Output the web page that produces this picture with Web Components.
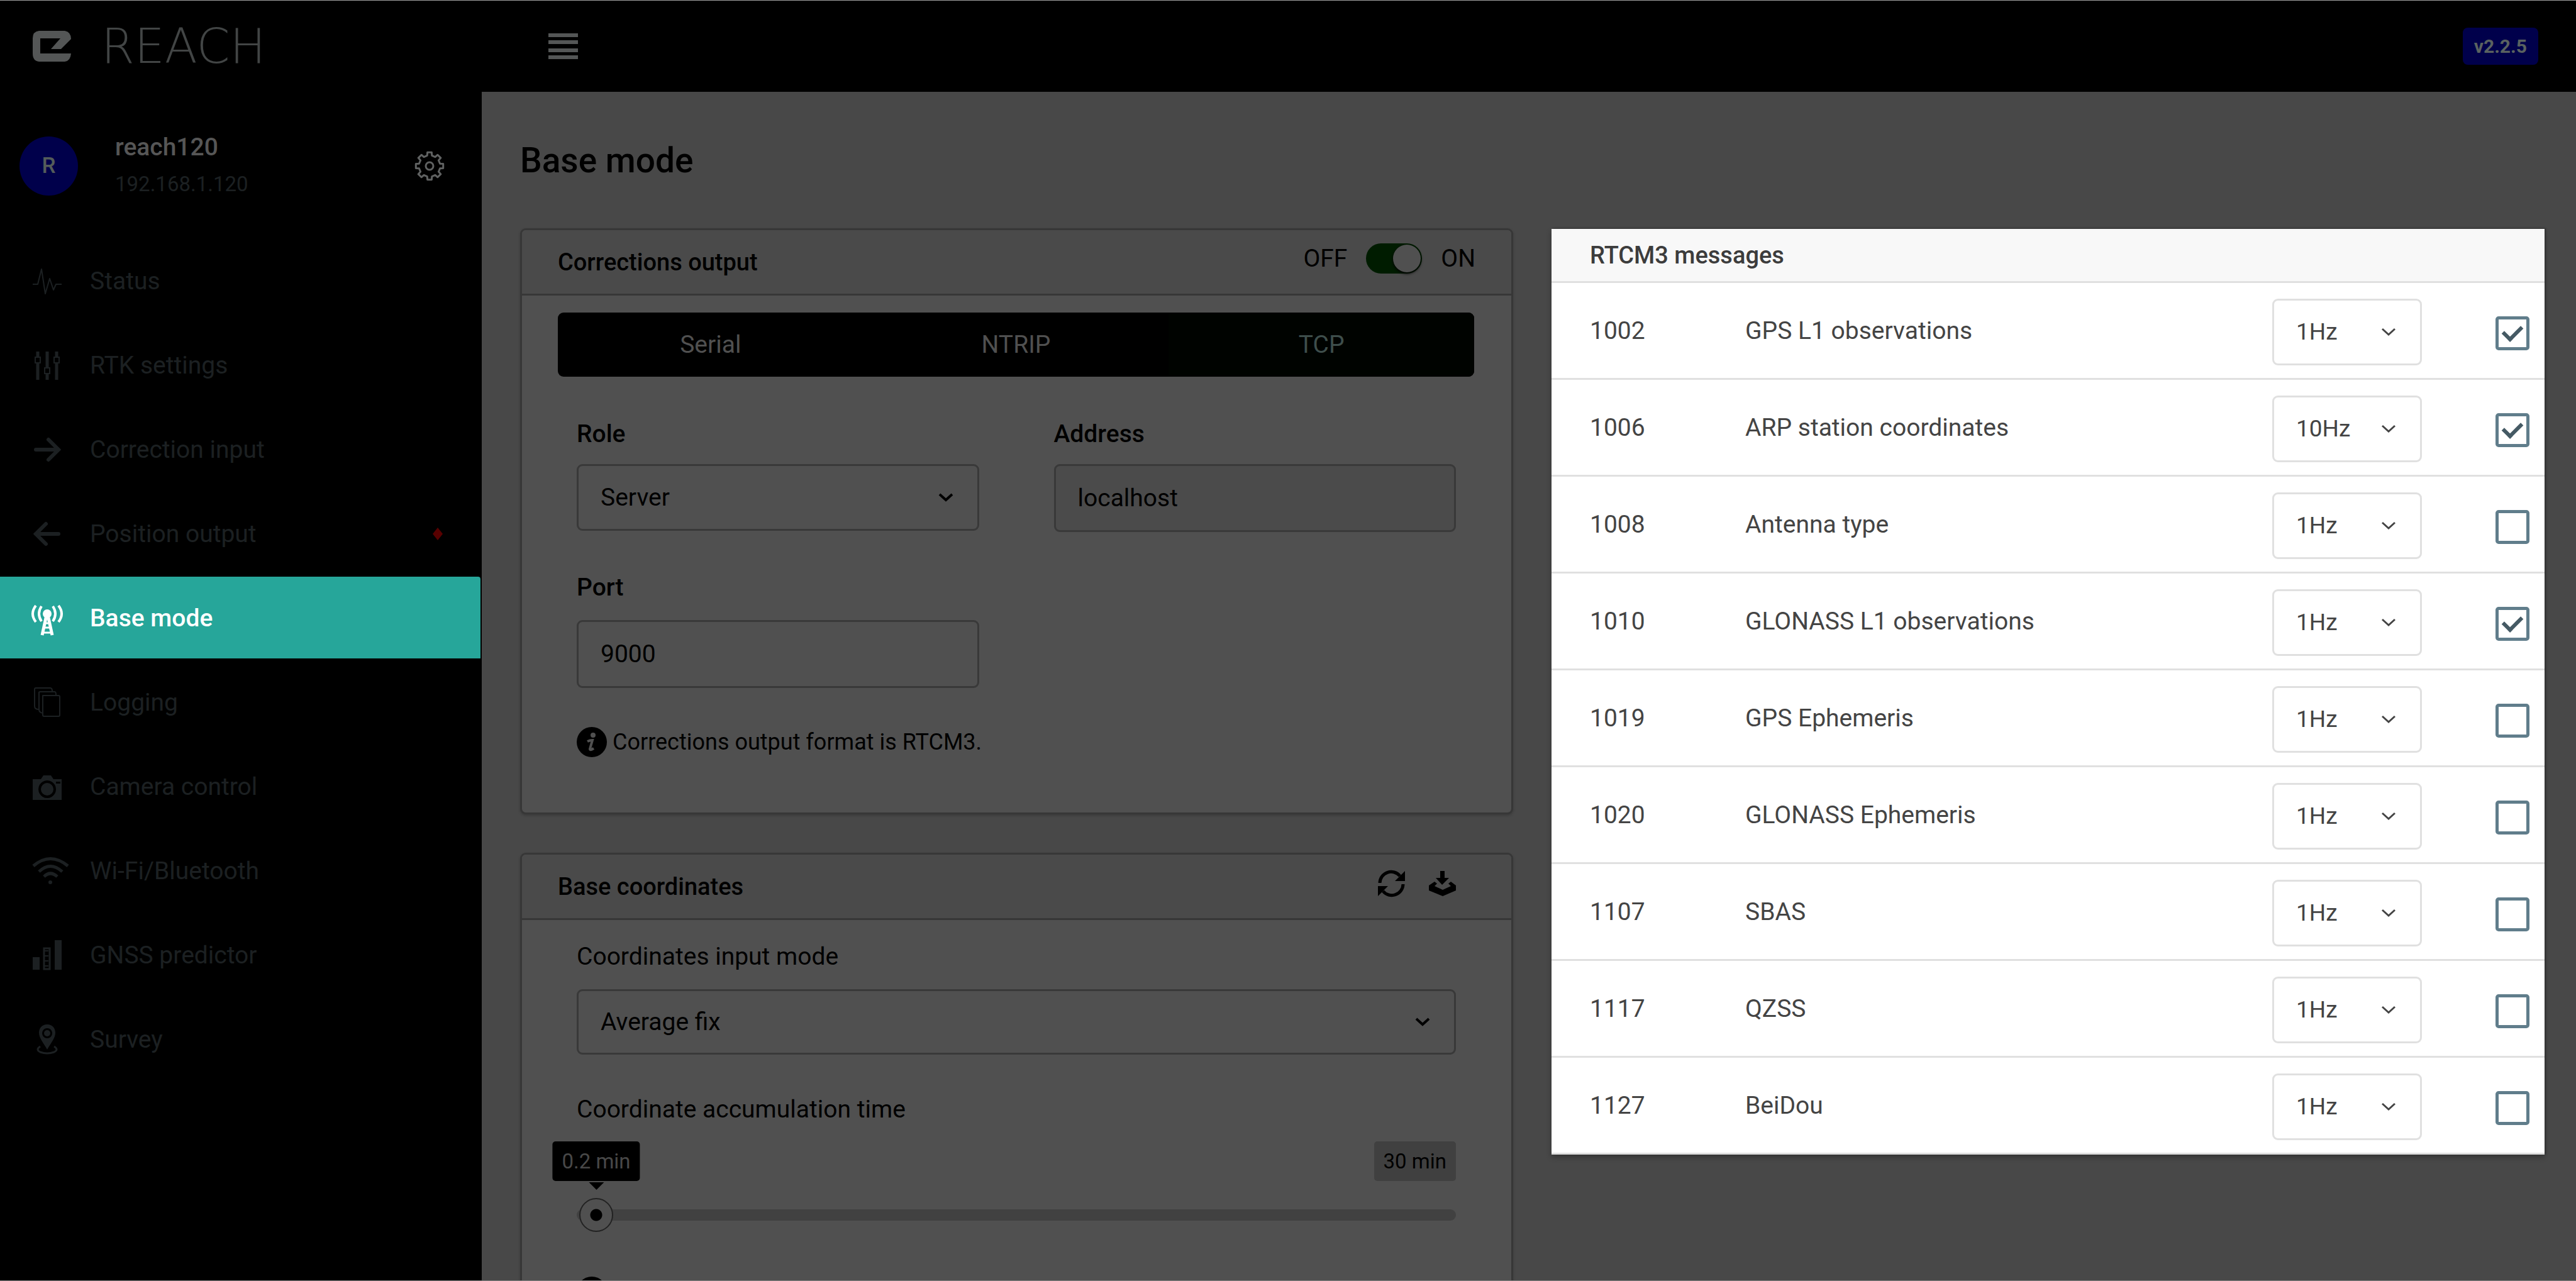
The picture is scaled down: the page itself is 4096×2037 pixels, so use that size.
<!DOCTYPE html>
<html lang="en">
<head>
<meta charset="utf-8">
<title>Reach – Base mode</title>
<style>
  body { margin: 0; background: #484848; font-family: Roboto, "Liberation Sans", sans-serif; font-size: 39px; line-height: 48px; color: #000; }
</style>
</head>
<body>
<reach-shell>
  <reach-topbar slot="top" version="v2.2.5"></reach-topbar>
  <reach-sidebar slot="side" device="reach120" address="192.168.1.120">
    <nav-item icon="status">Status</nav-item>
    <nav-item icon="sliders">RTK settings</nav-item>
    <nav-item icon="right">Correction input</nav-item>
    <nav-item icon="left" alert>Position output</nav-item>
    <nav-item icon="tower" active>Base mode</nav-item>
    <nav-item icon="copies">Logging</nav-item>
    <nav-item icon="camera">Camera control</nav-item>
    <nav-item icon="wifi">Wi-Fi/Bluetooth</nav-item>
    <nav-item icon="bars">GNSS predictor</nav-item>
    <nav-item icon="pin">Survey</nav-item>
  </reach-sidebar>
  <span slot="title">Base mode</span>
  <reach-card slot="left" heading="Corrections output">
    <reach-switch slot="actions"></reach-switch>
    <corrections-form></corrections-form>
  </reach-card>
  <reach-card slot="left" heading="Base coordinates">
    <card-actions slot="actions"></card-actions>
    <coordinates-form></coordinates-form>
  </reach-card>
  <rtcm-messages slot="right"></rtcm-messages>
</reach-shell>

<script>
const define = (name, css, html, setup) => customElements.define(name, class extends HTMLElement {
  constructor() {
    super();
    this.attachShadow({ mode: 'open' });
  }
  connectedCallback() {
    if (this.shadowRoot.childNodes.length) return;
    const t = document.createElement('template');
    t.innerHTML = `<style>*{box-sizing:border-box}${css}</style>` + (typeof html === 'function' ? html(this) : html);
    this.shadowRoot.append(t.content.cloneNode(true));
    if (setup) setup(this);
  }
});

/* Eight-toothed cog outline */
const cog = (() => {
  const p = [];
  for (let k = 0; k < 8; k++) {
    for (const [r, d] of [[17, -13], [22, -9], [22, 9], [17, 13]]) {
      const a = (k * 45 + d - 90) * Math.PI / 180;
      p.push((24 + r * Math.cos(a)).toFixed(1) + ' ' + (24 + r * Math.sin(a)).toFixed(1));
    }
  }
  return 'M' + p.join('L') + 'Z';
})();

/* name: [width, height, drawing] */
const ICONS = {
  status: [66, 60, '<path d="M10 35h8l6-24 6 39 7-24 6 18 4-9h9" fill="none" stroke="currentColor" stroke-width="2" stroke-linejoin="round"/>'],
  sliders: [66, 60, '<g fill="none" stroke="currentColor" stroke-width="5"><path d="M18 8v9M18 26v27M33 8v25M33 43v10M48 8v9M48 26v27"/><path stroke-width="2" d="M14 17h8v9h-8zM29 34h8v9h-8zM44 17h8v9h-8z"/></g>'],
  right: [66, 60, '<path d="M15 30h36M35 14l16 16-16 16" fill="none" stroke="currentColor" stroke-width="6" stroke-linecap="round"/>'],
  left: [66, 60, '<path d="M51 30H15M31 14L15 30l16 16" fill="none" stroke="currentColor" stroke-width="6" stroke-linecap="round"/>'],
  tower: [66, 60, '<circle cx="33" cy="23" r="7" fill="currentColor"/><g fill="none" stroke="currentColor" stroke-width="4"><path stroke-width="5" d="M32 25l-7 32M34 25l7 32"/><path stroke-width="3" d="M30 38h6M28 45h10M26 53h14"/><path d="M15 10q-10 13 0 26M24 11q-8 12 0 24M51 10q10 13 0 26M42 11q8 12 0 24"/></g>'],
  copies: [66, 60, '<g fill="none" stroke="currentColor" stroke-width="2" stroke-linejoin="round"><path d="M26 19h25q2 0 2 2v29q0 2-2 2H28q-2 0-2-2z"/><path d="M26 47q-6-1-6-6V14q0-1 2-1h23q2 0 2 5"/><path d="M20 41q-7 0-7-5V9q0-2 2-2h23q3 0 3 5"/></g>'],
  camera: [66, 60, '<path fill="currentColor" fill-rule="evenodd" d="M10 18h13l4-6h12l4 6h13v33H10zM33 20a14 14 0 1 0 .1 0zM47 22v3h7v-3z"/><circle cx="33" cy="34" r="10" fill="currentColor"/>'],
  wifi: [66, 60, '<g fill="none" stroke="currentColor" stroke-width="5"><path d="M11 22q27-23 55 0M20 31q18-17 37 0M28 39q10-10 21 0"/></g><circle cx="38" cy="48" r="3" fill="currentColor"/>'],
  bars: [66, 60, '<path fill="currentColor" d="M10 33h11v20H10zM45 6h11v47H45z"/><path d="M28 19h9v33h-9z" fill="none" stroke="currentColor" stroke-width="3"/><path d="M32 22v30" stroke="currentColor" stroke-width="6" stroke-dasharray="2 6"/>'],
  pin: [66, 60, '<path fill="currentColor" fill-rule="evenodd" d="M33 6c9 0 13 7 13 13 0 9-7 16-13 27-6-11-13-18-13-27 0-6 4-13 13-13zM33 12a8 8 0 1 0 .1 0z"/><circle cx="33" cy="20" r="5" fill="currentColor"/><path d="M22 41q-8 5 0 9 11 4 22 0 8-4 0-9" fill="none" stroke="currentColor" stroke-width="3"/>'],
  logo: [61, 49, '<path fill="currentColor" d="M10 0H51Q61 2 61 13L45 29H29L44 12H12V36H61Q60 48 51 49H10Q0 48 0 36V12Q0 1 10 0Z"/>'],
  menu: [47, 41, '<path fill="currentColor" d="M0 0h47v6H0zM0 11h47v6H0zM0 24h47v6H0zM0 35h47v6H0z"/>'],
  cog: [48, 48, `<path d="${cog}" fill="none" stroke="currentColor" stroke-width="3" stroke-linejoin="round"/><circle cx="24" cy="24" r="6" fill="none" stroke="currentColor" stroke-width="3"/>`],
  alert: [16, 20, '<path fill="currentColor" d="M8 0l8 10-8 10L0 10z"/>'],
  refresh: [43, 42, '<g><path d="M3 20A18 18 0 0 1 35 9" fill="none" stroke="currentColor" stroke-width="5"/><path fill="currentColor" d="M43 1v16H27z"/></g><g transform="rotate(180 21.5 21)"><path d="M3 20A18 18 0 0 1 35 9" fill="none" stroke="currentColor" stroke-width="5"/><path fill="currentColor" d="M43 1v16H27z"/></g>'],
  store: [43, 42, '<path fill="currentColor" d="M18 1h7v11h7L21 23 11 12h7zM0 24l9-6 4 3-4 4 13 6 13-6-4-4 4-3 8 6v8l-21 9L0 32z"/>'],
  info: [48, 48, '<circle cx="24" cy="24" r="24" fill="#000"/><circle cx="26" cy="13" r="4" fill="#505050"/><path d="M17 23q4-2 8-2l-4 14q0 3 6-1" fill="none" stroke="#505050" stroke-width="4"/>'],
  chevron: [24, 16, '<path d="M2 3l10 9L22 3" fill="none" stroke="currentColor" stroke-width="4"/>'],
  'chevron-thin': [24, 16, '<path d="M2 3l10 9L22 3" fill="none" stroke="currentColor" stroke-width="3"/>']
};

define('reach-icon', ':host{display:block;flex:none} svg{display:block;overflow:visible}', el => {
  const [w, h, body] = ICONS[el.getAttribute('name')];
  return `<svg width="${w}" height="${h}" viewBox="0 0 ${w} ${h}" aria-hidden="true">${body}</svg>`;
});

define('reach-shell', `
  :host{display:flex;flex-direction:column;height:100vh;overflow:hidden;box-sizing:border-box;border-top:1px solid #a0a0a0;border-bottom:1px solid #808080}
  .body{flex:1;min-height:0;display:flex}
  main{flex:1;min-width:0;padding:77px 50px 0 61px;overflow:hidden}
  h1{margin:0 0 76px;font-size:55px;line-height:64px;font-weight:500}
  .cols{display:grid;grid-template-columns:1fr 1fr;gap:61px;align-items:start}
  .left{display:flex;flex-direction:column;gap:61px;min-width:0}
`, `<slot name="top"></slot>
  <div class="body"><slot name="side"></slot>
    <main><h1><slot name="title"></slot></h1>
      <div class="cols"><div class="left"><slot name="left"></slot></div><slot name="right"></slot></div>
    </main></div>`);

define('reach-topbar', `
  :host{display:flex;align-items:center;flex:none;height:145px;background:#000;color:#545656}
  .brand{display:flex;align-items:center;gap:48px;width:766px;padding-left:52px;box-sizing:border-box;text-decoration:none;color:inherit}
  .word{font-family:"DejaVu Sans",sans-serif;font-weight:200;font-size:76px;line-height:80px;color:#424545}
  button{border:0;background:none;padding:0;margin-left:106px;color:inherit}
  .version{margin-left:auto;margin-right:60px;padding:0 18px;border-radius:8px;background:#00004b;color:#5a6260;font-size:30px;line-height:59px;font-weight:700}
`, el => `<a class="brand" href="#" aria-label="Reach home"><reach-icon name="logo"></reach-icon><span class="word">REACH</span></a>
  <button aria-label="Toggle menu"><reach-icon name="menu"></reach-icon></button>
  <span class="version">${el.getAttribute('version')}</span>`);

define('reach-sidebar', `
  :host{display:block;flex:none;width:766px;background:#000}
  .profile{display:flex;align-items:center;padding:64px 59px 0 31px}
  .avatar{width:93px;height:94px;border-radius:50%;background:#00004b;color:#545c5a;display:grid;place-items:center;font-size:35px;font-weight:500}
  .who{margin-left:59px;display:flex;flex-direction:column;gap:11px}
  .name{color:#565656;font-weight:500}
  .addr{color:#1c2022;font-size:33px}
  button{margin-left:auto;border:0;background:none;padding:0;color:#606262}
  nav{display:flex;flex-direction:column;gap:4px;margin-top:64px;padding-right:2px}
`, el => `<div class="profile"><div class="avatar">R</div>
    <div class="who"><span class="name">${el.getAttribute('device')}</span><span class="addr">${el.getAttribute('address')}</span></div>
    <button aria-label="Device settings"><reach-icon name="cog"></reach-icon></button></div>
  <nav><slot></slot></nav>`);

define('nav-item', `
  :host{display:block}
  a{display:flex;align-items:center;gap:35px;height:130px;padding:2px 60px 0 42px;color:#1c2022;text-decoration:none}
  :host([active]) a{background:#26a69a;color:#fff;font-weight:500;border-radius:0 4px 0 0}
  .alert{margin-left:auto;color:#580000}
`, el => `<a href="#"><reach-icon name="${el.getAttribute('icon')}"></reach-icon><span><slot></slot></span>
  ${el.hasAttribute('alert') ? '<reach-icon class="alert" name="alert"></reach-icon>' : ''}</a>`);

define('reach-card', `
  :host{display:block;border:3px solid #373737;border-radius:9px;background:#505050;box-shadow:0 2px 4px rgba(0,0,0,.2)}
  header{display:flex;justify-content:space-between;align-items:center;padding:27px 57px 26px;background:#4a4a4a;border-bottom:3px solid #373737;border-radius:6px 6px 0 0}
  h2{margin:0;font:inherit;font-size:38px;font-weight:500}
`, el => `<header><h2>${el.getAttribute('heading')}</h2><slot name="actions"></slot></header><slot></slot>`);

define('reach-switch', `
  :host{display:block;margin-top:-12px}
  label{display:flex;align-items:center;gap:30px}
  input{appearance:none;margin:0;width:89px;height:48px;border-radius:24px;background:#001c00;padding:2px;display:flex;justify-content:flex-end}
  input::before{content:"";width:44px;height:44px;border-radius:50%;background:#505050;box-shadow:0 2px 4px #000}
`, `<label>OFF<input type="checkbox" role="switch" checked aria-label="Corrections output">ON</label>`);

define('card-actions', `
  :host{display:flex;gap:38px;margin:-10px 0 0;padding-right:31px}
  button{border:0;background:none;padding:0;color:#000}
`, `<button aria-label="Refresh"><reach-icon name="refresh"></reach-icon></button><button aria-label="Save coordinates"><reach-icon name="store"></reach-icon></button>`);

/* Labelled text box or drop-down */
define('reach-field', `
  :host{display:block;--gap:24px}
  :host([roomy]){--gap:28px}
  label{display:block;font-weight:500;margin-bottom:var(--gap)}
  :host([plain]) label{font-weight:400}
  .box{display:grid;align-items:center}
  .box>*{grid-area:1/1}
  input,select{appearance:none;width:100%;height:106px;margin:0;padding:0 35px;border:3px solid #393939;border-radius:9px;background:transparent;color:#000;font:inherit;opacity:1}
  input{height:108px}
  :host([plain]) select{height:104px}
  input[readonly]{background:#4b4b4b}
  reach-icon{justify-self:end;margin-right:41px;pointer-events:none}
`, el => {
  const v = el.getAttribute('value');
  const control = el.hasAttribute('select')
    ? `<select id="c"><option>${v}</option></select><reach-icon name="chevron"></reach-icon>`
    : `<input id="c" type="text" value="${v}" ${el.hasAttribute('locked') ? 'readonly' : ''}>`;
  return `<label for="c">${el.getAttribute('label')}</label><div class="box">${control}</div>`;
});

define('corrections-form', `
  :host{display:block;padding:27px 59px 88px 57px}
  .tabs{display:grid;grid-template-columns:repeat(3,1fr);border-radius:9px;overflow:hidden;background:#000}
  .tabs button{height:102px;border:0;background:none;color:#505050;font:inherit}
  .tabs button[aria-selected=true]{background:#000300;color:#3e4e4b}
  .fields{display:grid;grid-template-columns:1fr 1fr;gap:64px 119px;padding:67px 29px 0 30px}
  .note{display:flex;align-items:center;gap:9px;margin:62px 0 0 30px;font-size:36px}
`, `<div class="tabs" role="tablist"><button role="tab" aria-selected="false">Serial</button><button role="tab" aria-selected="false">NTRIP</button><button role="tab" aria-selected="true">TCP</button></div>
  <div class="fields">
    <reach-field select label="Role" value="Server"></reach-field>
    <reach-field locked label="Address" value="localhost"></reach-field>
    <reach-field roomy label="Port" value="9000"></reach-field>
  </div>
  <div class="note"><reach-icon name="info"></reach-icon><span>Corrections output format is RTCM3.</span></div>`);

define('time-slider', `
  :host{display:block;margin-top:63px}
  label{display:block}
  .marks{position:relative;display:flex;justify-content:flex-end;margin:27px 0}
  .mark{padding:0 15px;border-radius:5px;background:#404040;font-size:33px;line-height:63px}
  .now{position:absolute;left:31px;top:0;transform:translateX(-50%);background:#000;color:#484848}
  .now::after{content:"";position:absolute;left:50%;top:65px;margin-left:-12px;border:12px solid transparent;border-bottom:0;border-top-color:#000}
  input{appearance:none;display:block;width:100%;height:54px;margin:0;background:transparent}
  input::-webkit-slider-runnable-track{height:18px;border-radius:9px;background:#414141}
  input::-webkit-slider-thumb{appearance:none;width:54px;height:54px;margin-top:-18px;border:2px solid #222;border-radius:50%;background:radial-gradient(circle,#000 9px,#505050 10px)}
`, `<label for="t">Coordinate accumulation time</label>
  <div class="marks"><span class="mark now">0.2 min</span><span class="mark">30 min</span></div>
  <input id="t" type="range" min="0.1" max="30" step="0.1" value="0.2">`);

define('coordinates-form', `
  :host{display:block;padding:34px 88px 60px 87px}
  .hint{margin-top:71px}
`, `<reach-field select plain roomy label="Coordinates input mode" value="Average fix"></reach-field>
  <time-slider></time-slider>
  <reach-icon class="hint" name="info"></reach-icon>`);

const MESSAGES = [
  ['1002', 'GPS L1 observations', '1Hz', true],
  ['1006', 'ARP station coordinates', '10Hz', true],
  ['1008', 'Antenna type', '1Hz', false],
  ['1010', 'GLONASS L1 observations', '1Hz', true],
  ['1019', 'GPS Ephemeris', '1Hz', false],
  ['1020', 'GLONASS Ephemeris', '1Hz', false],
  ['1107', 'SBAS', '1Hz', false],
  ['1117', 'QZSS', '1Hz', false],
  ['1127', 'BeiDou', '1Hz', false]
];

define('rtcm-messages', `
  :host{display:block;margin-top:1px;background:#fff;color:#444;box-shadow:2px -1px 2px #333,0 4px 8px rgba(0,0,0,.3)}
  h2{margin:0;padding:0 61px;height:86px;font:inherit;font-size:38px;line-height:85px;font-weight:500;color:#3c3c3c;background:#f8f8f8;border-bottom:3px solid #e0e0e0}
  table{width:100%;border-collapse:separate;border-spacing:0;table-layout:fixed}
  td{height:154px;padding:0;border-bottom:3px solid #e0e0e0}
  .code{width:308px;padding-left:61px}
  .rate{width:355px;padding-top:4px}
  .on{width:78px;padding-top:8px}
  .box{display:grid;align-items:center;width:238px}
  .box>*{grid-area:1/1}
  select{appearance:none;width:100%;height:106px;margin:0;padding:0 35px;border:3px solid #e0e0e0;border-radius:9px;background:#fff;color:#444;font:inherit;font-size:37px}
  reach-icon{justify-self:end;margin-right:41px;pointer-events:none}
  input{appearance:none;display:grid;place-items:center;width:54px;height:54px;margin:0;border:5px solid #607d8b;border-radius:5px}
  input:checked::before{content:"";width:24px;height:13px;margin-top:-7px;border:solid #455a64;border-width:0 0 6px 6px;transform:rotate(-45deg)}
`, () => `<h2>RTCM3 messages</h2><table><tbody>${MESSAGES.map(([code, name, rate, on]) => `<tr>
    <td class="code">${code}</td><td><label for="m${code}">${name}</label></td>
    <td class="rate"><div class="box"><select aria-label="${name} rate"><option>${rate}</option></select><reach-icon name="chevron-thin"></reach-icon></div></td>
    <td class="on"><input type="checkbox" id="m${code}" ${on ? 'checked' : ''}></td></tr>`).join('')}</tbody></table>`);
</script>
</body>
</html>
